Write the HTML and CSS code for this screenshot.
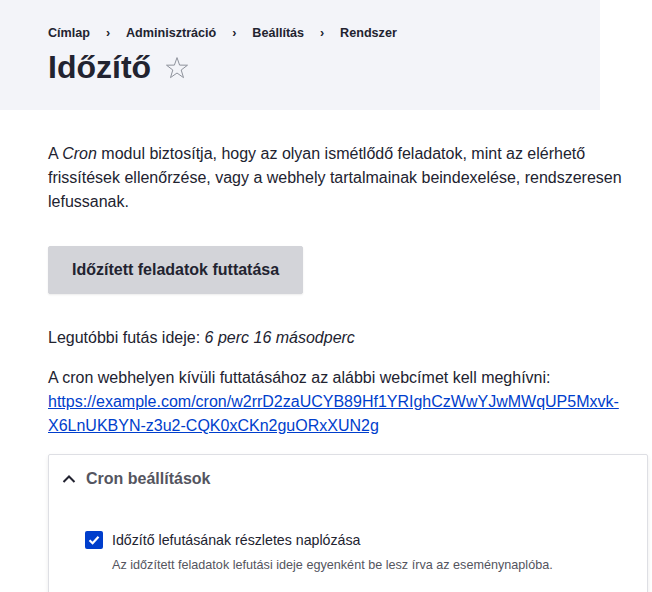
FILE: index.html
```html
<!DOCTYPE html>
<html lang="hu">
<head>
<meta charset="utf-8">
<title>Időzítő</title>
<link rel="stylesheet" href="styles.css">
</head>
<body>
<div class="page-header">
  <nav class="breadcrumb">
    <span class="crumb">Címlap</span>
    <span class="crumb">Adminisztráció</span>
    <span class="crumb">Beállítás</span>
    <span class="crumb">Rendszer</span>
  </nav>
  <div class="title-row">
    <h1 class="title">Időzítő</h1>
    <svg class="star" width="24" height="24" viewBox="0 0 24 24"><path d="M12 1.6 L14.6 9.1 L22.5 9.2 L16.2 14 L18.5 21.6 L12 17 L5.5 21.6 L7.8 14 L1.5 9.2 L9.4 9.1 Z" fill="none" stroke="#8e929c" stroke-width="1" stroke-linejoin="miter"/></svg>
  </div>
</div>
<main class="content">
  <p class="intro">A <em>Cron</em> modul biztosítja, hogy az olyan ismétlődő feladatok, mint az elérhető frissítések ellenőrzése, vagy a webhely tartalmainak beindexelése, rendszeresen lefussanak.</p>
  <button class="button">Időzített feladatok futtatása</button>
  <p class="last-run">Legutóbbi futás ideje: <em>6 perc 16 másodperc</em></p>
  <p class="cron-url">A cron webhelyen kívüli futtatásához az alábbi webcímet kell meghívni:<br><a href="#">https://example.com/cron/w2rrD2zaUCYB89Hf1YRIghCzWwYJwMWqUP5Mxvk-X6LnUKBYN-z3u2-CQK0xCKn2guORxXUN2g</a></p>
  <div class="details">
    <div class="summary">
      <svg class="chevron" width="14" height="10" viewBox="0 0 14 10"><path d="M1.5 8 L7 2.5 L12.5 8" fill="none" stroke="#222330" stroke-width="2"/></svg>
      <span>Cron beállítások</span>
    </div>
    <div class="details-body">
      <div class="checkbox-row">
        <span class="checkbox"><svg width="18" height="18" viewBox="0 0 18 18"><path d="M4.5 9.2 L7.6 12.2 L13.5 5.8" fill="none" stroke="#fff" stroke-width="2.2"/></svg></span>
        <span class="label">Időzítő lefutásának részletes naplózása</span>
      </div>
      <div class="description">Az időzített feladatok lefutási ideje egyenként be lesz írva az eseménynaplóba.</div>
    </div>
  </div>
</main>
</body>
</html>
```

FILE: styles.css
```css
html, body {
  margin: 0;
  padding: 0;
  background: #fff;
}
body {
  font-family: "Liberation Sans", Arial, sans-serif;
  color: #222330;
  font-size: 16px;
  line-height: 24px;
}
.page-header {
  width: 600px;
  height: 110px;
  box-sizing: border-box;
  background: #f3f4f9;
  padding: 24px 0 0 48px;
}
.breadcrumb {
  display: flex;
  font-size: 12.6px;
  line-height: 18px;
  font-weight: 700;
  color: #222330;
}
.crumb + .crumb::before {
  content: "›";
  display: inline-block;
  width: 36px;
  text-align: center;
  font-weight: 700;
}
.title-row {
  display: flex;
  align-items: center;
  margin-top: 5px;
}
.title {
  margin: 0;
  font-size: 32px;
  line-height: 40px;
  font-weight: 700;
}
.star {
  margin-left: 14px;
  margin-top: 1px;
}
.content {
  padding: 0 4px 0 48px;
  width: 600px;
}
.intro {
  margin: 32px 0 32px;
}
em {
  font-style: italic;
}
.button {
  display: block;
  font-family: inherit;
  font-size: 16px;
  line-height: 16px;
  font-weight: 700;
  color: #222330;
  background: #d3d4d9;
  border: 1px solid #d3d4d9;
  border-radius: 2px;
  padding: 15px 23px;
  margin: 0;
  box-shadow: 0 1px 2px rgba(0,0,0,0.08);
}
.last-run {
  margin: 32px 0 16px;
}
.cron-url {
  margin: 0 0 16px;
}
.cron-url a {
  color: #003ecc;
  text-decoration: underline;
}
.details {
  border: 1px solid #dedfe4;
  border-radius: 2px;
  box-shadow: 0 2px 4px rgba(0,0,0,0.08);
  height: 150px;
}
.summary {
  display: flex;
  align-items: center;
  padding: 15px 16px 14px 13px;
  font-weight: 700;
  color: #545560;
  line-height: 18px;
}
.chevron {
  margin-right: 10px;
}
.details-body {
  padding: 29px 36px 0 36px;
}
.checkbox-row {
  display: flex;
  align-items: center;
}
.checkbox {
  width: 18px;
  height: 18px;
  background: #003ecc;
  border-radius: 2px;
  display: flex;
  margin-right: 9px;
}
.label {
  font-size: 14.2px;
  line-height: 18px;
}
.description {
  padding-left: 27px;
  margin-top: 7px;
  font-size: 12.64px;
  line-height: 18px;
  color: #545560;
}
```
